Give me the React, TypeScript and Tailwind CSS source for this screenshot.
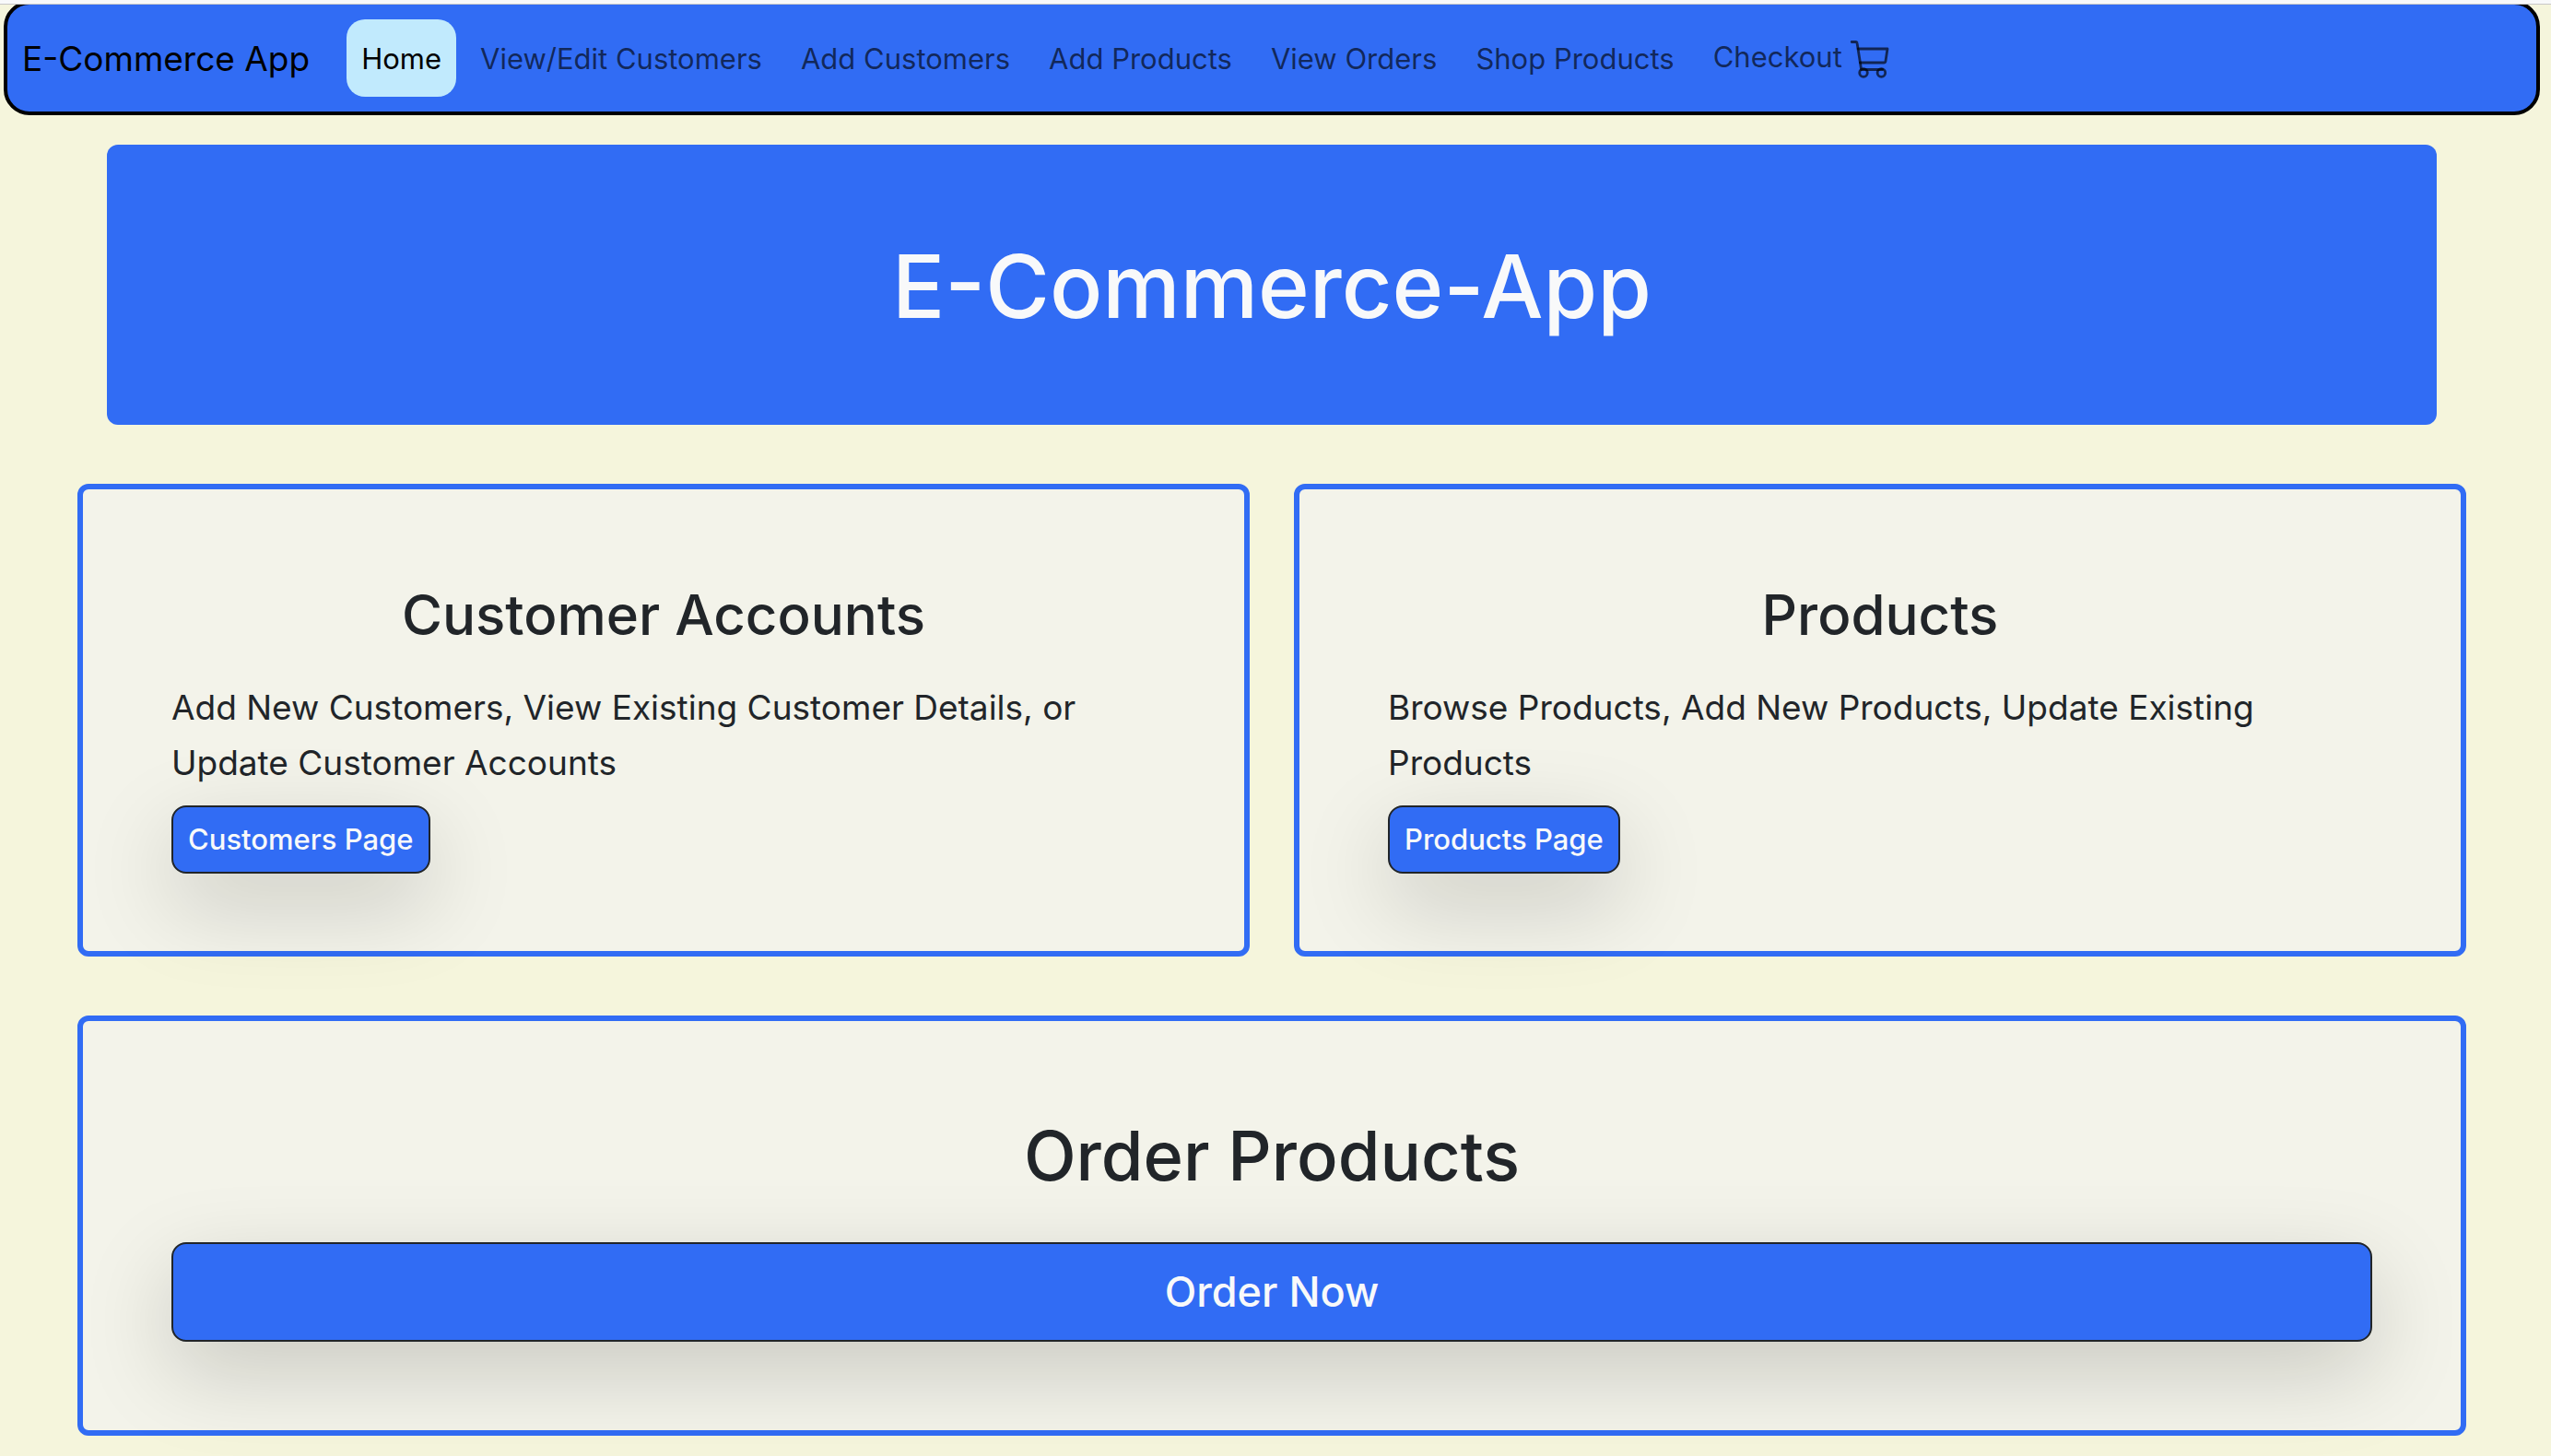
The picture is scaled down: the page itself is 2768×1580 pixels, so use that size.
const links = [
  "View/Edit Customers",
  "Add Customers",
  "Add Products",
  "View Orders",
  "Shop Products",
];

function CartIcon() {
  return (
    <svg
      viewBox="10 9 44 44"
      className="size-11 shrink-0"
      fill="none"
      stroke="currentColor"
      strokeWidth="2.8"
      strokeLinecap="round"
      strokeLinejoin="round"
      aria-hidden="true"
    >
      <path d="M12.2 11.5H16.6Q17.9 11.5 18.1 13L22.6 41.5H45.6" />
      <path d="M19.2 19H51L49 32.2Q48.7 34 46.9 34H21.4" />
      <circle cx="25" cy="45" r="4.3" />
      <circle cx="44.4" cy="45" r="4.3" />
    </svg>
  );
}

function Navbar() {
  return (
    <nav className="mr-3 -mt-1 ml-1 flex h-[124px] items-center rounded-[28px] border-4 border-black bg-[#316cf4] px-4">
      <a href="#" className="pt-[2px] text-[37px] leading-[60px] text-black">
        E-Commerce App
      </a>
      <ul className="ml-10 flex items-center gap-[10px] text-[31px] leading-[48px] text-black/65">
        <li>
          <a
            href="#"
            aria-current="page"
            className="block rounded-[20px] bg-[#c1eafd] px-4 pt-[19px] pb-[17px] text-black"
          >
            Home
          </a>
        </li>
        {links.map((label) => (
          <li key={label}>
            <a href="#" className="block px-4 pt-[19px] pb-[17px]">
              {label}
            </a>
          </li>
        ))}
        <li>
          <a href="#" className="flex items-center gap-2 px-4 pt-5 pb-4">
            <span className="pb-[6px]">Checkout</span>
            <CartIcon />
          </a>
        </li>
      </ul>
    </nav>
  );
}

interface CardProps {
  title: string;
  text: string;
  action: string;
}

function Card({ title, text, action }: CardProps) {
  return (
    <section className="rounded-xl border-[6px] border-[#316cf4] bg-[#f3f3ea] px-24 pt-24 pb-[84px]">
      <h2 className="text-center text-[60px] leading-[80px] font-medium">{title}</h2>
      <p className="mt-[31px] text-[37px] leading-[60px]">{text}</p>
      <button
        type="button"
        className="mt-4 h-[74px] rounded-2xl border-2 border-[#212529] bg-[#316cf4] px-4 text-[31px] font-medium text-[#f8f9fa] shadow-[0_32px_96px_rgba(0,0,0,0.176)]"
      >
        {action}
      </button>
    </section>
  );
}

export default function App() {
  return (
    <div className="min-h-screen overflow-hidden bg-[#f5f5dc] font-[Inter,sans-serif] text-[#212529]">
      <div className="relative z-10 h-[5px] border-b border-[#c8c8c8] bg-[#f8f9fa]" />
      <Navbar />
      <main className="mr-2 px-[84px] pt-8 pb-[22px]">
        <header className="mx-8 flex h-[304px] items-center justify-center rounded-xl bg-[#316cf4] pt-1">
          <h1 className="text-[95px] leading-[120px] font-medium text-[#f8f9fa]">E-Commerce-App</h1>
        </header>
        <div className="mt-16 grid grid-cols-2 gap-12">
          <Card
            title="Customer Accounts"
            text="Add New Customers, View Existing Customer Details, or Update Customer Accounts"
            action="Customers Page"
          />
          <Card
            title="Products"
            text="Browse Products, Add New Products, Update Existing Products"
            action="Products Page"
          />
        </div>
        <section className="mt-16 rounded-xl border-[6px] border-[#316cf4] bg-[#f3f3ea] px-24 pt-[98px] pb-24">
          <h2 className="text-center text-[74px] leading-[96px] font-medium">Order Products</h2>
          <button
            type="button"
            className="mt-[46px] h-[108px] w-full rounded-2xl border-2 border-[#212529] bg-[#316cf4] text-[45px] font-medium text-[#f8f9fa] shadow-[0_32px_96px_rgba(0,0,0,0.176)]"
          >
            Order Now
          </button>
        </section>
      </main>
    </div>
  );
}
